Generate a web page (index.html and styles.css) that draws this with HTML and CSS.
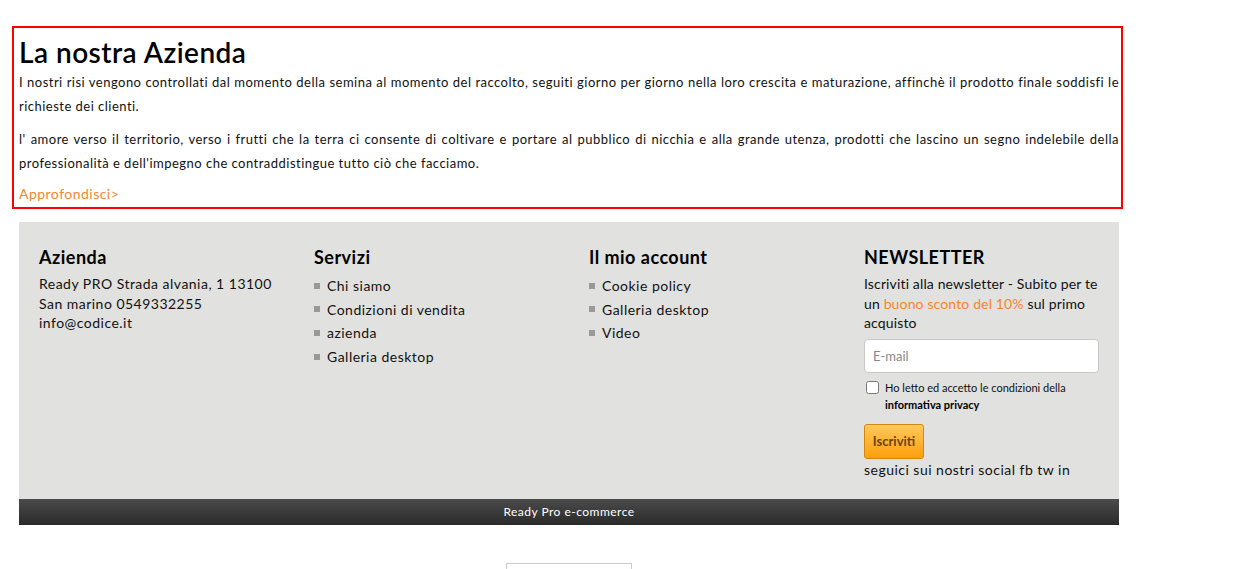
FILE: index.html
```html
<!DOCTYPE html>
<html>
	<head>
		<meta charset="UTF-8">
		<title>La nostra Azienda</title>
		<link rel="stylesheet" href="styles.css">
	</head>
	<body>
		<div id="wrap">
			<div class="about">
				<h1>La nostra Azienda</h1>
				<p>I nostri risi vengono controllati dal momento della semina al momento del raccolto, seguiti giorno per giorno nella loro crescita e maturazione, affinchè il prodotto finale soddisfi le richieste dei clienti.</p>
				<p>l' amore verso il territorio, verso i frutti che la terra ci consente di coltivare e portare al pubblico di nicchia e alla grande utenza, prodotti che lascino un segno indelebile della professionalità e dell'impegno che contraddistingue tutto ciò che facciamo.</p>
				<a class="more" href="javascript:;">Approfondisci&gt;</a>
			</div>

			<div class="footer">
				<div class="cols">
					<div class="col">
						<h3>Azienda</h3>
						<p class="addr">Ready PRO Strada alvania, 1 13100<br>San marino 0549332255<br>info@codice.it</p>
					</div>
					<div class="col">
						<h3>Servizi</h3>
						<ul>
							<li><a href="javascript:;">Chi siamo</a></li>
							<li><a href="javascript:;">Condizioni di vendita</a></li>
							<li><a href="javascript:;">azienda</a></li>
							<li><a href="javascript:;">Galleria desktop</a></li>
						</ul>
					</div>
					<div class="col">
						<h3>Il mio account</h3>
						<ul>
							<li><a href="javascript:;">Cookie policy</a></li>
							<li><a href="javascript:;">Galleria desktop</a></li>
							<li><a href="javascript:;">Video</a></li>
						</ul>
					</div>
					<div class="col news">
						<h3>NEWSLETTER</h3>
						<p class="addr">Iscriviti alla newsletter - Subito per te un <span class="hl">buono sconto del 10%</span> sul primo acquisto</p>
						<input class="mail" type="text" placeholder="E-mail">
						<label class="privacy">
							<input type="checkbox">
							<span>Ho letto ed accetto le condizioni della <b>informativa privacy</b></span>
						</label>
						<button class="btn">Iscriviti</button>
						<p class="social">seguici sui nostri social fb tw in</p>
					</div>
				</div>
				<div class="copy">Ready Pro e-commerce</div>
			</div>

			<div class="after"></div>
		</div>
	</body>
</html>
```

FILE: styles.css
```css
body,
ul,
p,
h1,
h3 {
	margin: 0;
	padding: 0;
}

li {
	list-style: none;
}

body {
	font-family: Lato, "Noto Sans", sans-serif;
	letter-spacing: 0.03em;
	color: #111;
	background: #fff;
}

a {
	color: #111;
	text-decoration: none;
}

#wrap {
	padding: 26px 0 0 12px;
	width: 1111px;
	overflow: hidden;
	height: 543px;
}

/* about */
.about {
	border: 2px solid #f00;
	padding: 6px 2px 4px 5px;
}

.about h1 {
	font-size: 28px;
	font-weight: 600;
	line-height: 36px;
	color: #000;
}

.about p {
	font-size: 13px;
	line-height: 24px;
	text-align: justify;
	margin-bottom: 9px;
}

.about .more {
	display: block;
	font-size: 14px;
	line-height: 19px;
	color: #f5862e;
}

/* footer */
.footer {
	margin: 13px 0 0 7px;
	width: 1100px;
}

.cols {
	display: flex;
	background: #e1e1df;
	padding: 24px 0 20px;
}

.col {
	width: 275px;
	padding: 0 20px;
	box-sizing: border-box;
}

.col h3 {
	font-size: 18px;
	font-weight: 700;
	line-height: 22px;
	color: #000;
	margin-bottom: 6px;
}

.col .addr {
	font-size: 14px;
	line-height: 19.5px;
}

.news .addr {
	letter-spacing: 0.01em;
}

.col li {
	font-size: 14px;
	line-height: 23.6px;
	display: flex;
	align-items: center;
}

.col li:before {
	content: "";
	width: 6px;
	height: 6px;
	background: #999;
	margin-right: 7px;
}

.news .hl {
	color: #f5862e;
}

.mail {
	display: block;
	width: 235px;
	height: 34px;
	box-sizing: border-box;
	margin-top: 6px;
	border: 1px solid #c8c8c8;
	border-radius: 4px;
	padding: 0 8px;
	font-family: inherit;
	font-size: 13px;
	background: #fff;
}

.mail::placeholder {
	color: #888;
}

.privacy {
	display: flex;
	align-items: flex-start;
	margin-top: 6px;
	font-size: 11px;
	line-height: 17px;
	letter-spacing: 0;
}

.privacy input {
	width: 13px;
	height: 13px;
	margin: 2px 6px 0 2px;
	flex: none;
}

.privacy b {
	color: #000;
}

.btn {
	display: block;
	margin-top: 11px;
	width: 60px;
	height: 35px;
	border: 1px solid #d7860c;
	border-radius: 3px;
	background: linear-gradient(#ffc95a, #ff9e0c);
	font-family: inherit;
	font-size: 13px;
	font-weight: 700;
	color: #6b4310;
	padding: 0;
	letter-spacing: 0;
}

.social {
	font-size: 14px;
	line-height: 19px;
	margin-top: 1px;
}

.copy {
	height: 26px;
	line-height: 26px;
	text-align: center;
	font-size: 12px;
	color: #fff;
	background: linear-gradient(#4b4b4b, #2a2a2a);
}

.after {
	margin: 38px 0 0 494px;
	width: 124px;
	height: 40px;
	border: 1px solid #ccc;
	background: #fff;
}
```
